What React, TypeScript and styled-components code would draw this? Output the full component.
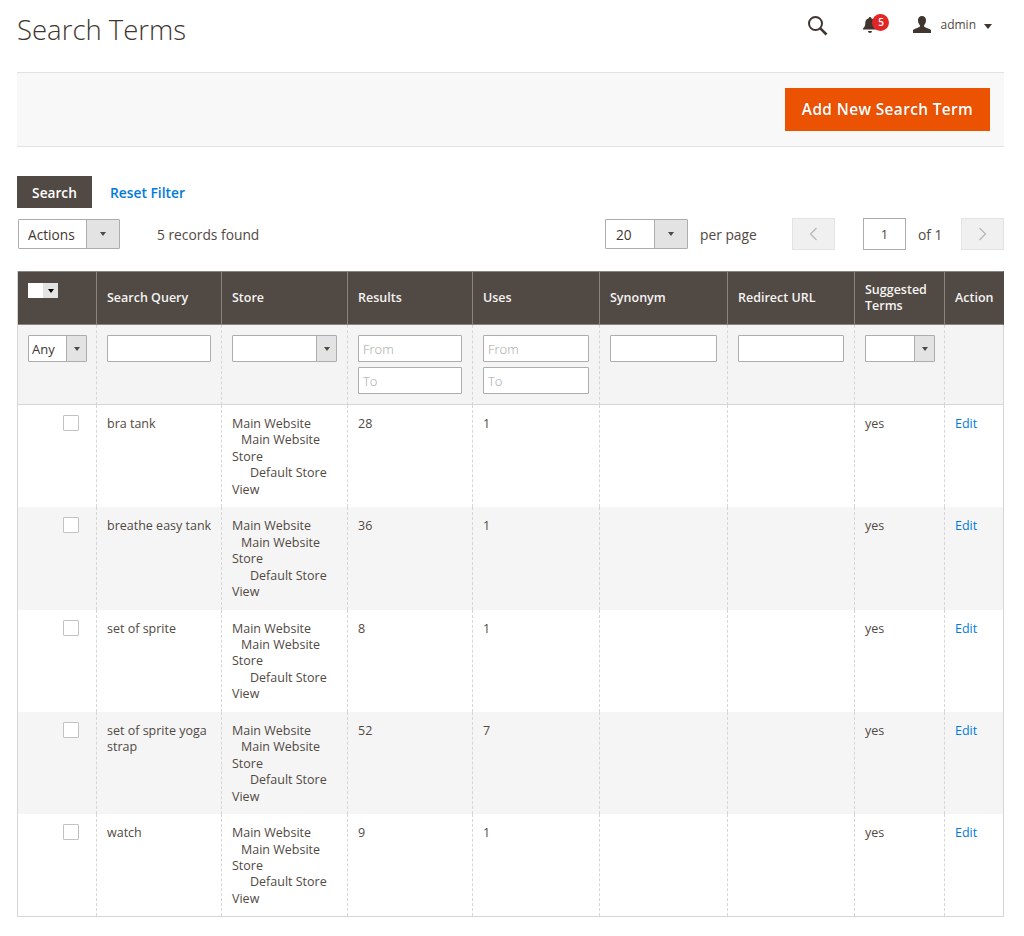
import React from 'react'
import styled, { createGlobalStyle } from 'styled-components'

const GlobalStyle = createGlobalStyle`
  html, body {
    margin: 0;
    padding: 0;
    background: #fff;
    font-family: 'Open Sans', 'Liberation Sans', sans-serif;
    font-size: 14px;
    color: #41362f;
  }
  * { box-sizing: border-box; }
`

const Page = styled.div`
  width: 1024px;
  height: 936px;
  padding: 0 20px 0 17px;
  overflow: hidden;
`

const TopBar = styled.header`
  display: flex;
  justify-content: space-between;
  align-items: flex-start;
  height: 73px;
  border-bottom: 1px solid #e3e3e3;
`

const Title = styled.h1`
  margin: 11px 0 0;
  font-size: 27.5px;
  line-height: 38px;
  font-weight: 300;
  color: #41362f;
`

const TopActions = styled.div`
  display: flex;
  align-items: center;
  height: 20px;
  margin-top: 15px;
  margin-right: 12px;
`

const IconSlot = styled.div<{ $width: number }>`
  position: relative;
  display: flex;
  align-items: center;
  width: ${({ $width }) => $width}px;
`

const Badge = styled.span`
  position: absolute;
  left: 12px;
  top: -2px;
  width: 17px;
  height: 17px;
  border-radius: 50%;
  background: #e22626;
  color: #fff;
  font-size: 10px;
  font-weight: 600;
  line-height: 17px;
  text-align: center;
`

const BellIcon = styled.svg`
  margin-left: 2px;
`

const UserName = styled.span`
  font-size: 12px;
  line-height: 18px;
  margin-left: 8px;
  color: #514943;
`

const SmallCaret = styled.span`
  display: inline-block;
  margin-left: 8px;
  margin-top: 2px;
  border-left: 4px solid transparent;
  border-right: 4px solid transparent;
  border-top: 5px solid #41362f;
`

const ActionBar = styled.div`
  display: flex;
  justify-content: flex-end;
  height: 74px;
  padding: 15px 14px 0 0;
  background: #f8f8f8;
  border-bottom: 1px solid #e3e3e3;
`

const PrimaryButton = styled.button`
  width: 205px;
  height: 43px;
  padding: 0;
  background: #eb5202;
  border: 1px solid #eb5202;
  color: #fff;
  font-family: inherit;
  font-size: 15.4px;
  font-weight: 600;
  letter-spacing: 0.025em;
  text-shadow: 0 0 1px rgba(0, 0, 0, 0.2);
`

const FilterActions = styled.div`
  display: flex;
  align-items: center;
  gap: 18px;
  margin-top: 29px;
`

const DarkButton = styled.button`
  width: 75px;
  height: 32px;
  padding: 0;
  background: #514943;
  border: 1px solid #514943;
  color: #fff;
  font-family: inherit;
  font-size: 13.7px;
  font-weight: 600;
`

const ResetLink = styled.a`
  color: #007bdb;
  font-size: 13.8px;
  font-weight: 600;
`

const Toolbar = styled.div`
  display: flex;
  align-items: center;
  height: 32px;
  margin-top: 10px;
  padding-left: 1px;
  font-size: 13.8px;
`

const RecordCount = styled.span`
  margin-left: 37px;
  color: #514943;
`

const Pager = styled.div`
  display: flex;
  align-items: center;
  margin-left: auto;
  color: #514943;
`

const PerPage = styled.span`
  width: 58px;
  margin: 0 34px 0 12px;
  white-space: nowrap;
`

const PageBox = styled.div`
  width: 43px;
  height: 32px;
  margin-left: 28px;
  display: flex;
  align-items: center;
  justify-content: center;
  background: #fff;
  border: 1px solid #adadad;
  font-size: 13px;
`

const PageButton = styled.div`
  width: 43px;
  height: 32px;
  display: flex;
  align-items: center;
  justify-content: center;
  background: #f0f0f0;
  border: 1px solid #e3e3e3;
`

const OfPages = styled.span`
  width: 55px;
  padding-left: 12px;
`

const SelectBox = styled.div<{ $width: number; $height: number }>`
  display: flex;
  width: ${({ $width }) => $width}px;
  height: ${({ $height }) => $height}px;
  background: #fff;
  border: 1px solid #adadad;
  border-radius: 1px;
  font-size: ${({ $height }) => ($height > 28 ? 13.7 : 13)}px;
  color: #41362f;
`

const SelectLabel = styled.span<{ $inset: number }>`
  flex: 1;
  display: flex;
  align-items: center;
  padding-left: ${({ $inset }) => $inset}px;
`

const SelectArrow = styled.span<{ $width: number }>`
  width: ${({ $width }) => $width}px;
  display: flex;
  align-items: center;
  justify-content: center;
  background: #e3e3e3;
  border-left: 1px solid #adadad;
`

const TinyCaret = styled.span`
  border-left: 3.5px solid transparent;
  border-right: 3.5px solid transparent;
  border-top: 4px solid #514943;
`

const Grid = styled.table`
  width: 987px;
  margin-top: 21px;
  table-layout: fixed;
  border-collapse: separate;
  border-spacing: 0;
  font-size: 12.5px;
  border-left: 1px solid #d6d6d6;
  border-bottom: 1px solid #d6d6d6;
`

const HeadCell = styled.th`
  height: 54px;
  padding: 0 8px 0 10px;
  background: #514943;
  color: #f4f3f2;
  font-size: 12.5px;
  font-weight: 600;
  line-height: 16.5px;
  text-align: left;
  border-right: 1px solid #8a837f;
  border-top: 1px solid #8a837f;
  border-bottom: 1px solid #8a837f;
  &:last-child { border-right-color: #514943; }
`

const MassCell = styled(HeadCell)`
  vertical-align: top;
  padding-top: 11px;
`

const MassSelect = styled.div`
  display: flex;
  width: 30px;
  height: 15px;
`

const MassBox = styled.span`
  width: 15px;
  background: #fff;
`

const MassArrow = styled.span`
  flex: 1;
  display: flex;
  align-items: center;
  justify-content: center;
  background: #e3e3e3;
  ${TinyCaret} {
    border-top-color: #000;
  }
`

const FilterCell = styled.td`
  height: 80px;
  padding: 10px;
  vertical-align: top;
  background: #f4f4f4;
  border-right: 1px dashed #d6d6d6;
  border-bottom: 1px solid #d6d6d6;
  &:last-child { border-right: 1px solid #d6d6d6; }
`

const TextField = styled.div<{ $gap?: boolean }>`
  width: 100%;
  height: 27px;
  padding-left: 4px;
  margin-top: ${({ $gap }) => ($gap ? 5 : 0)}px;
  background: #fff;
  border: 1px solid #adadad;
  border-radius: 1px;
  color: #a5a5a5;
  font-size: 13px;
  font-weight: 300;
  line-height: 27px;
`

const Row = styled.tr<{ $alt: boolean }>`
  background: ${({ $alt }) => ($alt ? '#f5f5f5' : '#fff')};
`

const Cell = styled.td`
  height: 102.25px;
  padding: 11px 6px 9px 10px;
  vertical-align: top;
  line-height: 16.45px;
  color: #514943;
  border-right: 1px dashed #d6d6d6;
  &:last-child { border-right: 1px solid #d6d6d6; }
`

const CheckCell = styled(Cell)`
  padding: 10px 0 0 45px;
`

const CheckBox = styled.span`
  display: block;
  width: 16px;
  height: 16px;
  background: #fff;
  border: 1px solid #c2c2c2;
  border-radius: 1px;
`

const StoreLine = styled.div<{ $indent: number }>`
  text-indent: ${({ $indent }) => $indent}px;
`

const EditLink = styled.a`
  color: #007bdb;
`

const columns = [79, 125, 126, 125, 127, 128, 127, 90, 59]

const terms = [
  { query: 'bra tank', results: '28', uses: '1' },
  { query: 'breathe easy tank', results: '36', uses: '1' },
  { query: 'set of sprite', results: '8', uses: '1' },
  { query: 'set of sprite yoga strap', results: '52', uses: '7' },
  { query: 'watch', results: '9', uses: '1' },
]

function Select({ width, height = 27, arrow = 20, inset = 3, label = '' }: {
  width: number
  height?: number
  arrow?: number
  inset?: number
  label?: string
}) {
  return (
    <SelectBox $width={width} $height={height}>
      <SelectLabel $inset={inset}>{label}</SelectLabel>
      <SelectArrow $width={arrow}><TinyCaret /></SelectArrow>
    </SelectBox>
  )
}

function Chevron({ flip }: { flip?: boolean }) {
  return (
    <svg width="9" height="14" viewBox="0 0 9 14" fill="none" stroke="#b5b5b5" strokeWidth="1.2">
      <path d={flip ? 'M1.5 1l6 6-6 6' : 'M7.5 1l-6 6 6 6'} />
    </svg>
  )
}

export default function App() {
  return (
    <Page>
      <GlobalStyle />
      <TopBar>
        <Title>Search Terms</Title>
        <TopActions>
          <IconSlot $width={53}>
            <svg width="21" height="21" viewBox="0 0 21 21" fill="none" stroke="#41362f">
              <circle cx="8.500" cy="8.500" r="6.500" strokeWidth="2" />
              <path d="M13.300 13.300l6.200 6.200" strokeWidth="2.600" />
            </svg>
          </IconSlot>
          <IconSlot $width={52}>
            <BellIcon width="16" height="18" viewBox="0 0 16 18" fill="#41362f">
              <path d="M8 1a1.300 1.300 0 0 1 1.300 1.300c2.400.6 3.400 2.400 3.400 4.700 0 3 1 4.300 2.300 5.500v1H1v-1C2.300 11.300 3.300 10 3.300 7c0-2.300 1-4.100 3.400-4.700A1.300 1.300 0 0 1 8 1zM6 15h4a2 2 0 0 1-4 0z" />
            </BellIcon>
            <Badge>5</Badge>
          </IconSlot>
          <svg width="20" height="18" viewBox="0 0 20 18" fill="#41362f">
            <path d="M10 0c2.500 0 4 1.800 4 4.300 0 2-.8 3.700-1.700 4.700-.5.600-.4 1.500.3 1.900 1.900 1 5.400 1.700 6.400 3.100V17H1v-3c1-1.400 4.500-2.100 6.400-3.100.7-.4.8-1.300.3-1.900C6.800 8 6 6.300 6 4.300 6 1.800 7.500 0 10 0z" />
          </svg>
          <UserName>admin</UserName>
          <SmallCaret />
        </TopActions>
      </TopBar>

      <ActionBar>
        <PrimaryButton>Add New Search Term</PrimaryButton>
      </ActionBar>

      <FilterActions>
        <DarkButton>Search</DarkButton>
        <ResetLink>Reset Filter</ResetLink>
      </FilterActions>

      <Toolbar>
        <Select width={102} height={30} arrow={33} inset={9} label="Actions" />
        <RecordCount>5 records found</RecordCount>
        <Pager>
          <Select width={83} height={30} arrow={33} inset={10} label="20" />
          <PerPage>per page</PerPage>
          <PageButton><Chevron /></PageButton>
          <PageBox>1</PageBox>
          <OfPages>of 1</OfPages>
          <PageButton><Chevron flip /></PageButton>
        </Pager>
      </Toolbar>

      <Grid>
        <colgroup>
          {columns.map((w, i) => <col key={i} style={{ width: w }} />)}
        </colgroup>
        <thead>
          <tr>
            <MassCell>
              <MassSelect><MassBox /><MassArrow><TinyCaret /></MassArrow></MassSelect>
            </MassCell>
            <HeadCell>Search Query</HeadCell>
            <HeadCell>Store</HeadCell>
            <HeadCell>Results</HeadCell>
            <HeadCell>Uses</HeadCell>
            <HeadCell>Synonym</HeadCell>
            <HeadCell>Redirect URL</HeadCell>
            <HeadCell>Suggested Terms</HeadCell>
            <HeadCell>Action</HeadCell>
          </tr>
          <tr>
            <FilterCell><Select width={59} label="Any" /></FilterCell>
            <FilterCell><TextField /></FilterCell>
            <FilterCell><Select width={105} /></FilterCell>
            <FilterCell><TextField>From</TextField><TextField $gap>To</TextField></FilterCell>
            <FilterCell><TextField>From</TextField><TextField $gap>To</TextField></FilterCell>
            <FilterCell><TextField /></FilterCell>
            <FilterCell><TextField /></FilterCell>
            <FilterCell><Select width={70} /></FilterCell>
            <FilterCell />
          </tr>
        </thead>
        <tbody>
          {terms.map((t, i) => (
            <Row key={t.query} $alt={i % 2 === 1}>
              <CheckCell><CheckBox /></CheckCell>
              <Cell>{t.query}</Cell>
              <Cell>
                <StoreLine $indent={0}>Main Website</StoreLine>
                <StoreLine $indent={9}>Main Website Store</StoreLine>
                <StoreLine $indent={18}>Default Store View</StoreLine>
              </Cell>
              <Cell>{t.results}</Cell>
              <Cell>{t.uses}</Cell>
              <Cell />
              <Cell />
              <Cell>yes</Cell>
              <Cell><EditLink>Edit</EditLink></Cell>
            </Row>
          ))}
        </tbody>
      </Grid>
    </Page>
  )
}
